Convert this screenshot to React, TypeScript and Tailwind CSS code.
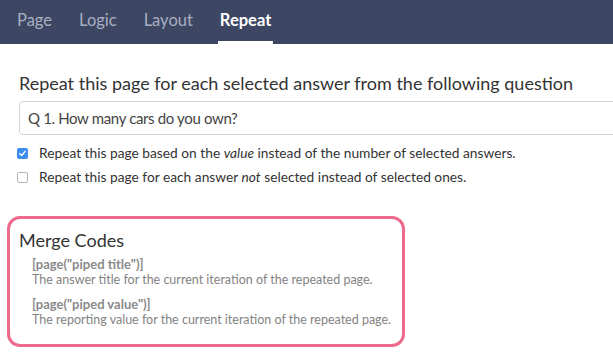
import React from 'react';

const tabs = ['Page', 'Logic', 'Layout', 'Repeat'];

export default function App() {
  return (
    <div className="w-[613px] h-[357px] bg-white overflow-hidden" style={{ fontFamily: 'Lato, "Open Sans", sans-serif' }}>
      {/* Tabs */}
      <div className="h-[44px] bg-[#3d4662] flex items-end pl-[17px] gap-[27px]">
        {tabs.map((t) => (
          <div
            key={t}
            className={`h-[44px] flex items-center text-[16.5px] border-b-[3px] ${
              t === 'Repeat' ? 'text-white font-bold border-white px-[2px] -mx-[2px]' : 'text-[#a9b0c2] border-transparent'
            }`}
          >
            {t}
          </div>
        ))}
      </div>

      <div className="pl-[19px] pt-[27px]">
        <div className="text-[18px] text-[#333] leading-[24px]">
          Repeat this page for each selected answer from the following question
        </div>
        <div className="mt-[6px] h-[34px] w-[620px] border border-[#d4d4d4] rounded-[4px] flex items-center pl-[8px] text-[15px] text-[#444] tracking-[-0.35px]">
          Q 1. How many cars do you own?
        </div>

        <div className="mt-[8px] flex flex-col gap-[4px] text-[13.75px] text-[#333]">
          <label className="flex items-center h-[20px] gap-[11px] -ml-[2px]">
            <span className="w-[11px] h-[11px] rounded-[2px] bg-[#3b8df0] flex items-center justify-center">
              <svg width="9" height="9" viewBox="0 0 10 10" fill="none">
                <path d="M2 5.2 L4.1 7.3 L8 2.6" stroke="white" strokeWidth="1.6" strokeLinecap="round" strokeLinejoin="round" />
              </svg>
            </span>
            <span>
              Repeat this page based on the <i>value</i> instead of the number of selected answers.
            </span>
          </label>
          <label className="flex items-center h-[20px] gap-[11px] -ml-[2px]">
            <span className="w-[11px] h-[11px] rounded-[2px] border border-[#b5b5b5] bg-white" />
            <span>
              Repeat this page for each answer <i>not</i> selected instead of selected ones.
            </span>
          </label>
        </div>
      </div>

      <div className="ml-[7px] mt-[29px] w-[398px] h-[131px] border-[3px] border-[#ee6a8b] rounded-[13px] pl-[9px] pt-[10px]">
        <div className="text-[18px] text-[#333] leading-[22px]">Merge Codes</div>
        <div className="pl-[13px] mt-[5px] text-[#838383] leading-[16px]">
          <div className="font-bold text-[13px] text-[#8a8a8a]">[page("piped title")]</div>
          <div className="text-[12.5px]">The answer title for the current iteration of the repeated page.</div>
          <div className="font-bold text-[13px] text-[#8a8a8a] mt-[8px]">[page("piped value")]</div>
          <div className="text-[12.5px]">The reporting value for the current iteration of the repeated page.</div>
        </div>
      </div>
    </div>
  );
}
